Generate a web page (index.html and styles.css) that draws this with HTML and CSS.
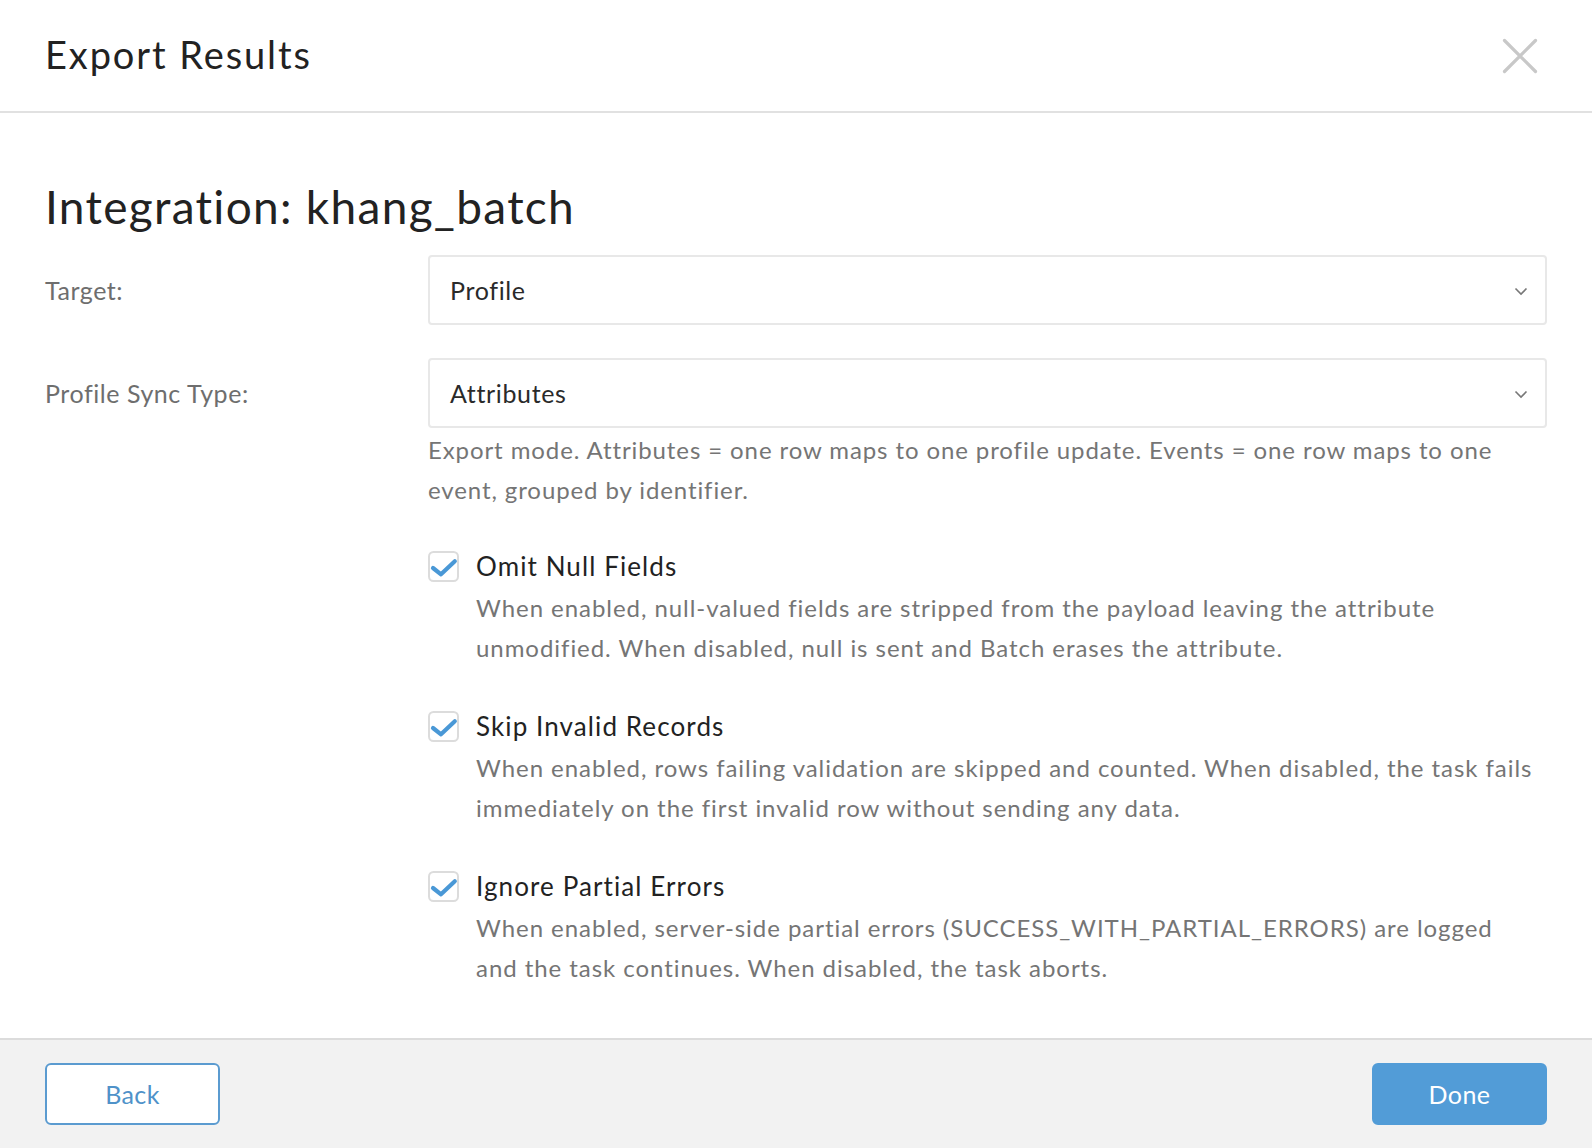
FILE: index.html
```html
<!DOCTYPE html>
<html lang="en">
<head>
<meta charset="utf-8">
<title>Export Results</title>
<link rel="stylesheet" href="styles.css">
</head>
<body>
<div class="modal">
  <header class="modal-header">
    <h1 class="modal-title">Export Results</h1>
    <button class="close-btn" aria-label="Close">
      <svg width="36" height="36" viewBox="0 0 36 36"><path d="M2.5 2.5 L33.5 33.5 M33.5 2.5 L2.5 33.5" stroke="#c8c8c8" stroke-width="3.2" stroke-linecap="round" fill="none"/></svg>
    </button>
  </header>

  <main class="modal-body">
    <h2 class="integration-title">Integration: khang_batch</h2>

    <div class="form-row">
      <label class="form-label">Target:</label>
      <div class="form-control">
        <div class="select">
          <span>Profile</span>
          <svg class="chevron" width="14" height="9" viewBox="0 0 14 9"><path d="M1.5 1.5 L7 7 L12.5 1.5" stroke="#777" stroke-width="1.6" fill="none"/></svg>
        </div>
      </div>
    </div>

    <div class="form-row">
      <label class="form-label">Profile Sync Type:</label>
      <div class="form-control">
        <div class="select">
          <span>Attributes</span>
          <svg class="chevron" width="14" height="9" viewBox="0 0 14 9"><path d="M1.5 1.5 L7 7 L12.5 1.5" stroke="#777" stroke-width="1.6" fill="none"/></svg>
        </div>
        <p class="help-text">Export mode. Attributes = one row maps to one profile update. Events = one row maps to one event, grouped by identifier.</p>

        <div class="options">
          <div class="option">
            <svg class="checkbox" width="31" height="31" viewBox="0 0 31 31"><rect x="1" y="1" width="29" height="29" rx="4.5" fill="#fff" stroke="#dcdcdc" stroke-width="2"/><path d="M5 17 L13 23.3 L26.8 10.3" stroke="#4a98d6" stroke-width="4.2" stroke-linecap="round" stroke-linejoin="round" fill="none"/></svg>
            <div class="option-text">
              <div class="option-label">Omit Null Fields</div>
              <p class="option-desc">When enabled, null-valued fields are stripped from the payload leaving the attribute unmodified. When disabled, null is sent and Batch erases the attribute.</p>
            </div>
          </div>
          <div class="option">
            <svg class="checkbox" width="31" height="31" viewBox="0 0 31 31"><rect x="1" y="1" width="29" height="29" rx="4.5" fill="#fff" stroke="#dcdcdc" stroke-width="2"/><path d="M5 17 L13 23.3 L26.8 10.3" stroke="#4a98d6" stroke-width="4.2" stroke-linecap="round" stroke-linejoin="round" fill="none"/></svg>
            <div class="option-text">
              <div class="option-label">Skip Invalid Records</div>
              <p class="option-desc">When enabled, rows failing validation are skipped and counted. When disabled, the task fails immediately on the first invalid row without sending any data.</p>
            </div>
          </div>
          <div class="option">
            <svg class="checkbox" width="31" height="31" viewBox="0 0 31 31"><rect x="1" y="1" width="29" height="29" rx="4.5" fill="#fff" stroke="#dcdcdc" stroke-width="2"/><path d="M5 17 L13 23.3 L26.8 10.3" stroke="#4a98d6" stroke-width="4.2" stroke-linecap="round" stroke-linejoin="round" fill="none"/></svg>
            <div class="option-text">
              <div class="option-label">Ignore Partial Errors</div>
              <p class="option-desc">When enabled, server-side partial errors (SUCCESS_WITH_PARTIAL_ERRORS) are logged<br>and the task continues. When disabled, the task aborts.</p>
            </div>
          </div>
        </div>
      </div>
    </div>
  </main>

  <footer class="modal-footer">
    <button class="btn btn-outline">Back</button>
    <button class="btn btn-primary">Done</button>
  </footer>
</div>
</body>
</html>
```

FILE: styles.css
```css
* { box-sizing: border-box; }

html, body {
  margin: 0;
  padding: 0;
  background: #fff;
}

body {
  font-family: Lato, "Open Sans", sans-serif;
  color: #222;
}

.modal {
  width: 1592px;
  height: 1148px;
  display: flex;
  flex-direction: column;
}

/* header */
.modal-header {
  height: 113px;
  flex: none;
  display: flex;
  align-items: center;
  justify-content: space-between;
  padding: 0 54px 0 45px;
  border-bottom: 2px solid #e1e1e1;
}

.modal-title {
  margin: 0 0 4px 0;
  font-size: 38px;
  font-weight: 400;
  letter-spacing: 1.9px;
  color: #222;
}

.close-btn {
  border: 0;
  background: none;
  padding: 0;
  width: 36px;
  height: 36px;
  display: flex;
  cursor: pointer;
}

/* body */
.modal-body {
  flex: 1;
  padding: 62px 45px 0 45px;
}

.integration-title {
  margin: 0 0 16px 0;
  font-size: 46px;
  font-weight: 400;
  line-height: 64px;
  letter-spacing: 1.3px;
  color: #222;
}

.form-row {
  display: grid;
  grid-template-columns: 383px 1fr;
  margin-bottom: 33px;
}

.form-label {
  font-size: 25px;
  letter-spacing: 0.55px;
  color: #6e6e6e;
  line-height: 70px;
}

.select {
  height: 70px;
  border: 2px solid #e8e8e8;
  border-radius: 4px;
  display: flex;
  align-items: center;
  justify-content: space-between;
  padding: 0 17px 0 20px;
  font-size: 25px;
  letter-spacing: 0.65px;
  color: #2a2a2a;
}

.chevron { margin-top: 2px; }

.help-text {
  margin: 2px 0 0 0;
  font-size: 24px;
  line-height: 40px;
  letter-spacing: 0.9px;
  color: #757575;
}

/* checkbox options */
.options {
  display: flex;
  flex-direction: column;
  gap: 38px;
  margin-top: 36px;
}

.option {
  display: flex;
  gap: 17px;
  align-items: flex-start;
}

.checkbox {
  flex: none;
  display: block;
  margin-top: 5px;
}

.option-label {
  font-size: 26px;
  line-height: 40px;
  letter-spacing: 1.1px;
  color: #222;
}

.option-desc {
  margin: 2px 0 0 0;
  font-size: 24px;
  line-height: 40px;
  letter-spacing: 0.95px;
  color: #757575;
}

/* footer */
.modal-footer {
  flex: none;
  height: 110px;
  background: #f2f2f2;
  border-top: 2px solid #dcdcdc;
  display: flex;
  justify-content: space-between;
  align-items: center;
  padding: 0 45px;
}

.btn {
  height: 62px;
  width: 175px;
  border-radius: 6px;
  font-family: inherit;
  font-size: 25px;
  letter-spacing: 0.4px;
  cursor: pointer;
}

.btn-outline {
  background: #fff;
  border: 2px solid #5b9bd0;
  color: #4f92c9;
}

.btn-primary {
  background: #529cd7;
  border: 2px solid #529cd7;
  color: #fff;
}
```
